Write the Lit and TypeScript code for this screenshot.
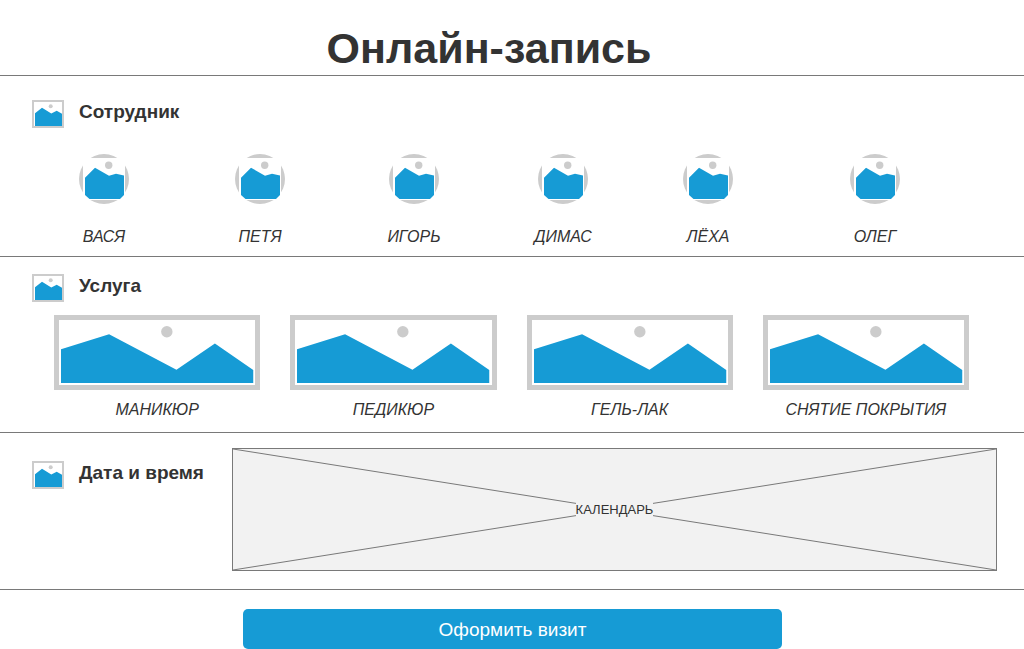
import { LitElement, html, css } from "lit";
import { customElement, state } from "lit/decorators.js";

const EMPLOYEES = ["ВАСЯ", "ПЕТЯ", "ИГОРЬ", "ДИМАС", "ЛЁХА", "ОЛЕГ"];
const SERVICES = ["МАНИКЮР", "ПЕДИКЮР", "ГЕЛЬ-ЛАК", "СНЯТИЕ ПОКРЫТИЯ"];

const sectionIcon = html`
  <svg class="section-icon" viewBox="0 0 32 28" aria-hidden="true">
    <rect x="1" y="1" width="30" height="26" fill="#fff" stroke="#ccc" stroke-width="2" />
    <circle cx="18.7" cy="6.3" r="2" fill="#ccc" />
    <path d="M3 13.3 10 7.7 19.3 13.6 24.7 10.7 30 13.8V26H3Z" fill="#169bd5" />
  </svg>
`;

const avatar = html`
  <svg class="avatar" viewBox="0 0 50 50" aria-hidden="true">
    <circle cx="25" cy="25" r="25" fill="#ccc" />
    <rect x="4" y="4" width="42" height="42" fill="#fff" />
    <circle cx="29.7" cy="11.3" r="3.7" fill="#ccc" />
    <path d="M6 23.7 16 13.7 30 21.8 37 19.7 45 21.4V41L41 45H10.5L6 41Z" fill="#169bd5" />
  </svg>
`;

const picture = html`
  <svg class="picture" viewBox="0 0 196 65" preserveAspectRatio="none" aria-hidden="true">
    <circle cx="107.7" cy="11.8" r="5.7" fill="#ccc" />
    <path d="M2 29.3 50 14.2 117.3 49.7 155.7 23.5 194 50V63H2Z" fill="#169bd5" />
  </svg>
`;

@customElement("app-root")
export class AppRoot extends LitElement {
  @state() private employee = "";
  @state() private service = "";

  static styles = css`
    :host {
      display: block;
      background: #fff;
      color: #333;
      font-family: "Liberation Sans", Arial, sans-serif;
    }
    button {
      font: inherit;
      color: inherit;
      border: 0;
      padding: 0;
      margin: 0;
      background: none;
      cursor: pointer;
    }
    .header {
      padding: 23px 46px 2px 0;
      border-bottom: 1px solid #797979;
    }
    .title {
      margin: 0;
      font-size: 43px;
      line-height: 50px;
      font-weight: 700;
      text-align: center;
    }
    .section {
      border-bottom: 1px solid #797979;
    }
    .section-head {
      display: flex;
      align-items: flex-start;
      gap: 15px;
      padding-left: 32px;
    }
    .section-icon {
      display: block;
      width: 32px;
      height: 28px;
    }
    .section-title {
      margin: 0;
      font-size: 19px;
      line-height: 24px;
      font-weight: 700;
    }
    .staff {
      padding: 24px 0 9px;
    }
    .employees {
      display: grid;
      grid-template-columns: 156fr 156fr 152fr 146fr 144fr 190fr;
      padding: 26px 54px 0 26px;
    }
    .choice {
      display: flex;
      flex-direction: column;
      align-items: center;
      font-size: 16px;
      line-height: 20px;
      font-style: italic;
    }
    .employee {
      gap: 23px;
    }
    .avatar {
      display: block;
      width: 50px;
      height: 50px;
    }
    .catalog {
      padding: 17px 0 12px;
    }
    .services {
      display: grid;
      grid-template-columns: repeat(4, 1fr);
      gap: 30px;
      padding: 13px 55px 0 54px;
    }
    .service {
      gap: 10px;
    }
    .picture {
      display: block;
      box-sizing: border-box;
      width: 100%;
      height: 75px;
      border: 5px solid #ccc;
    }
    .schedule {
      display: grid;
      grid-template-columns: 232px 1fr;
      padding: 15px 27px 18px 0;
    }
    .schedule-head {
      padding-top: 13px;
    }
    .calendar {
      display: grid;
      place-items: center;
      box-sizing: border-box;
      height: 123px;
      border: 1px solid #797979;
      background: #f2f2f2;
    }
    .cross,
    .calendar-label {
      grid-area: 1 / 1;
    }
    .cross {
      display: block;
      width: 100%;
      height: 121px;
    }
    .calendar-label {
      background: #f2f2f2;
      font-size: 13px;
      line-height: 15px;
      z-index: 1;
    }
    .footer {
      padding: 19px 242px 0 243px;
    }
    .submit {
      display: block;
      width: 100%;
      height: 40px;
      padding-top: 2px;
      border-radius: 5px;
      background: #169bd5;
      color: #fff;
      font-size: 19px;
      line-height: 22px;
    }
  `;

  render() {
    return html`
      <header class="header"><h1 class="title">Онлайн-запись</h1></header>
      <main>
        <section class="section staff">
          <div class="section-head">
            ${sectionIcon}
            <h2 class="section-title">Сотрудник</h2>
          </div>
          <div class="employees">
            ${EMPLOYEES.map(
              (name) => html`
                <button
                  class="choice employee"
                  type="button"
                  aria-pressed=${this.employee === name}
                  @click=${() => (this.employee = name)}
                >
                  ${avatar}<span>${name}</span>
                </button>
              `
            )}
          </div>
        </section>
        <section class="section catalog">
          <div class="section-head">
            ${sectionIcon}
            <h2 class="section-title">Услуга</h2>
          </div>
          <div class="services">
            ${SERVICES.map(
              (name) => html`
                <button
                  class="choice service"
                  type="button"
                  aria-pressed=${this.service === name}
                  @click=${() => (this.service = name)}
                >
                  ${picture}<span>${name}</span>
                </button>
              `
            )}
          </div>
        </section>
        <section class="section schedule">
          <div class="section-head schedule-head">
            ${sectionIcon}
            <h2 class="section-title">Дата и время</h2>
          </div>
          <div class="calendar">
            <svg class="cross" viewBox="0 0 763 121" preserveAspectRatio="none" aria-hidden="true">
              <path d="M0 0 763 121M0 121 763 0" stroke="#797979" fill="none" />
            </svg>
            <span class="calendar-label">КАЛЕНДАРЬ</span>
          </div>
        </section>
      </main>
      <footer class="footer">
        <button class="submit" type="button">Оформить визит</button>
      </footer>
    `;
  }
}
